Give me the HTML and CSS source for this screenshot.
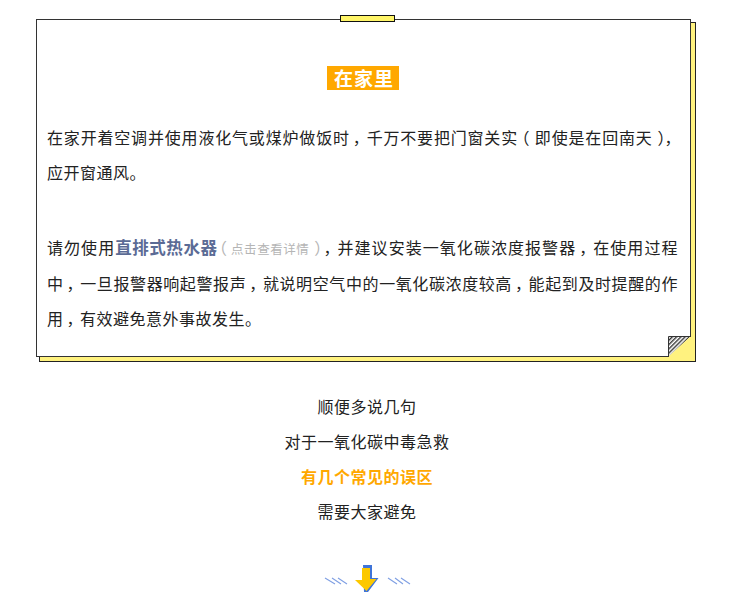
FILE: index.html
```html
<!DOCTYPE html>
<html lang="zh-CN">
<head>
<meta charset="utf-8">
<title>在家里</title>
<link rel="stylesheet" href="styles.css">
</head>
<body>
<main class="page">
  <section class="note">
    <span class="tape"></span>
    <div class="title-row"><h2 class="title">在家里</h2></div>
    <p class="para">在家开着空调并使用液化气或煤炉做饭时<span class="comma">，</span>千万不要把门窗关实<span class="open">（</span>即使是在回南天<span class="close">）</span><span class="comma">，</span>应开窗通风。</p>
    <p class="para para-gap">请勿使用<strong class="link">直排式热水器</strong><span class="hint-paren hint-open">（</span><span class="hint">点击查看详情</span><span class="hint-paren hint-close">）</span><span class="comma">，</span>并建议安装一氧化碳浓度报警器<span class="comma">，</span>在使用过程中<span class="comma">，</span>一旦报警器响起警报声<span class="comma">，</span>就说明空气中的一氧化碳浓度较高<span class="comma">，</span>能起到及时提醒的作用<span class="comma">，</span>有效避免意外事故发生。</p>
    <svg class="fold" width="23" height="21" viewBox="0 0 23 21" aria-hidden="true">
      <defs>
        <pattern id="hatch" width="3" height="3" patternUnits="userSpaceOnUse" patternTransform="rotate(-45)">
          <rect width="3" height="3" fill="#fff"/>
          <rect width="3" height="1.4" fill="#333"/>
        </pattern>
      </defs>
      <path d="M1 20 L1 1 L22 1 Z" fill="url(#hatch)"/>
      <path d="M0 21 L23 0 L23 21 Z" fill="#fff27f"/>
      <path d="M0.5 21 L0.5 0.5 L23 0.5" fill="none" stroke="#333" stroke-width="1"/>
    </svg>
  </section>
  <section class="closing">
    <p>顺便多说几句</p>
    <p>对于一氧化碳中毒急救</p>
    <p class="accent">有几个常见的误区</p>
    <p>需要大家避免</p>
  </section>
  <div class="arrow-row">
    <svg width="92" height="30" viewBox="0 0 92 30" aria-hidden="true">
      <g fill="none" stroke="#7f9fe3" stroke-width="1.1">
        <path d="M5 14 L15 20 M12 14 L21 20 M18 14 L27 20"/>
        <path d="M68 14 L77 20 M75 14 L83 20 M81 14 L90 20"/>
      </g>
      <path d="M43 1 H52 V14 H58.5 L48 28 L44 28 Z" fill="#3f74d8"/>
      <path d="M42 4 H50 V15 H56.5 L46.5 27 L35 16 H42 Z" fill="#fcc800"/>
    </svg>
  </div>
</main>
</body>
</html>
```
FILE: styles.css
```css
html, body {
  margin: 0;
  padding: 0;
}

html {
  background: #fff;
}

.page {
  width: 732px;
  padding-top: 19px;
  box-sizing: border-box;
  font-family: "Noto Sans CJK SC", sans-serif;
  color: #222;
  font-size: 16px;
  letter-spacing: 0.5px;
}

.open {
  margin: 0 4.5px 0 -4.5px;
}

.close {
  margin: 0 -5px 0 5px;
}

.comma {
  margin: 0 -3px 0 3px;
}

.note {
  position: relative;
  width: 655px;
  height: 338px;
  margin-left: 36px;
  box-sizing: border-box;
  padding: 46px 12px 0 10px;
  border: 1px solid #333;
  background: #fff;
}

.note::before {
  content: "";
  position: absolute;
  z-index: -1;
  left: 2px;
  top: 2px;
  width: 657px;
  height: 340px;
  box-sizing: border-box;
  border: 1px solid #222;
  background: #fff27f;
}

.tape {
  position: absolute;
  left: 303px;
  top: -5px;
  width: 55px;
  height: 7px;
  box-sizing: border-box;
  border: 1px solid #111;
  background: #fff568;
}

.fold {
  position: absolute;
  right: -1px;
  bottom: -1px;
}

.title-row {
  display: flex;
  justify-content: center;
  padding-left: 1px;
  margin-bottom: 30px;
}

.title {
  margin: 0;
  padding: 0 5px 0 7px;
  height: 24px;
  line-height: 24px;
  background: #ffa800;
  color: #fff;
  font-size: 19px;
  font-weight: 700;
  letter-spacing: 1px;
}

.para {
  margin: 0;
  line-height: 35px;
  text-align: justify;
}

.para-gap {
  margin-top: 40px;
}

.link {
  color: #5b6b95;
  font-size: 16.5px;
  font-weight: 700;
  letter-spacing: 0;
}

.hint {
  color: #b5b5b5;
  font-size: 12.5px;
  letter-spacing: 0;
}

.hint-paren {
  color: #b5b5b5;
}

.hint-open {
  margin: 0 3px 0 -6.5px;
}

.hint-close {
  margin: 0 -3px 0 5px;
}

.closing {
  margin-top: 32px;
  padding-left: 2px;
  text-align: center;
}

.closing p {
  margin: 0;
  line-height: 35px;
}

.closing .accent {
  color: #ffa800;
  font-weight: 700;
}

.arrow-row {
  display: flex;
  justify-content: center;
  margin-top: 35px;
}
```
